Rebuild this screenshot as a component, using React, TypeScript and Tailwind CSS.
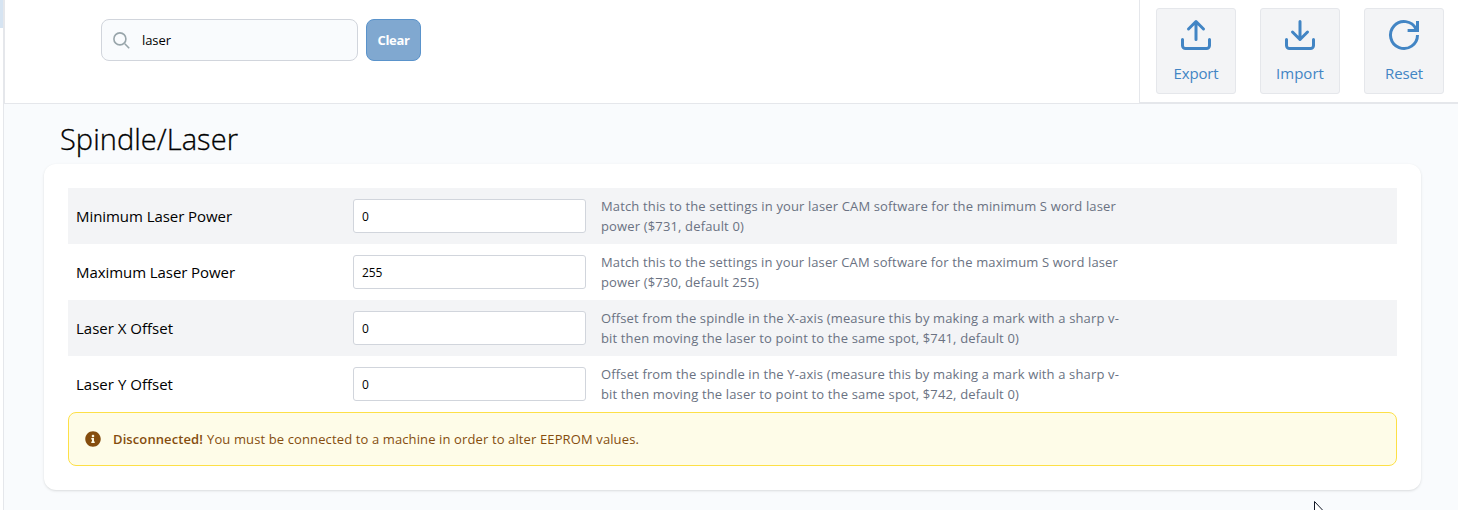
import React from "react";
import { FaInfoCircle } from "react-icons/fa";

const rows = [
  { label: "Minimum Laser Power", w: 156, value: "0", lines: ["Match this to the settings in your laser CAM software for the minimum S word laser", "power ($731, default 0)"] , lw: [515, 143] },
  { label: "Maximum Laser Power", w: 159, value: "255", lines: ["Match this to the settings in your laser CAM software for the maximum S word laser", "power ($730, default 255)"], lw: [517, 158] },
  { label: "Laser X Offset", w: 97, value: "0", lines: ["Offset from the spindle in the X-axis (measure this by making a mark with a sharp v-", "bit then moving the laser to point to the same spot, $741, default 0)"], lw: [518, 418] },
  { label: "Laser Y Offset", w: 97, value: "0", lines: ["Offset from the spindle in the Y-axis (measure this by making a mark with a sharp v-", "bit then moving the laser to point to the same spot, $742, default 0)"], lw: [518, 418] },
];

function Fit({ w, children }: { w: number; children: string }) {
  const ref = React.useRef<HTMLSpanElement>(null);
  const [ls, setLs] = React.useState(0);
  React.useLayoutEffect(() => {
    if (ref.current) {
      const natural = ref.current.getBoundingClientRect().width - ls * children.length;
      setLs((w - natural) / children.length);
    }
  }, [w, children]);
  return (
    <span ref={ref} className="inline-block whitespace-pre" style={{ letterSpacing: ls + "px" }}>
      {children}
    </span>
  );
}

function Stroke({ children }: { children: React.ReactNode }) {
  return (
    <svg viewBox="0 0 24 24" className="size-9 shrink-0" fill="none" stroke="currentColor" strokeWidth="2" strokeLinecap="round" strokeLinejoin="round">
      {children}
    </svg>
  );
}

function Action({ label, w, children }: { label: string; w: number; children: React.ReactNode }) {
  return (
    <button className="flex h-[86px] w-20 flex-col items-center rounded-[3px] border border-gray-200 bg-gray-100 pt-2 text-[#4285c4]">
      {children}
      <span className="mt-2 text-[15px] leading-6"><Fit w={w}>{label}</Fit></span>
    </button>
  );
}

export default function App() {
  return (
    <div className="flex h-[510px] w-full overflow-hidden bg-white font-['Open_Sans',sans-serif] text-black">
      <div className="w-[3px] shrink-0">
        <div className="h-7 bg-[#d6e4f2]" />
      </div>
      <div className="relative flex flex-1 flex-col border-l border-gray-200 bg-[#f9fbfd]">
        <header className="flex h-[104px] shrink-0 border-b border-l border-gray-200 bg-white">
          <div className="flex flex-1 items-start gap-2 pt-[19px] pl-24">
            <label className="flex h-[42px] w-[257px] items-center rounded-lg border border-gray-300 bg-[#f9fbfd] pl-[11px] text-[13px]">
              <svg viewBox="0 0 17 17" className="mr-3 size-[17px]" fill="none" stroke="#98a5aa" strokeWidth="1.6">
                <circle cx="6.9" cy="6.9" r="6" />
                <path d="M11.8 11.8 16.2 16.2" />
              </svg>
              <span className="pt-0.5"><Fit w={29}>laser</Fit></span>
            </label>
            <button className="flex h-[42px] w-[55px] items-center justify-center rounded-lg border border-[#5a93cb] bg-[#80a8d0] pt-0.5 text-[13px] font-bold text-white">
              <Fit w={32}>Clear</Fit>
            </button>
          </div>
          <div className="flex h-[103px] w-[319px] gap-6 border-b border-l border-gray-200 pt-2 pl-4">
            <Action label="Export" w={45}>
              <Stroke><path d="M21 15v4a2 2 0 0 1-2 2H5a2 2 0 0 1-2-2v-4M17 8l-5-5-5 5M12 3v12" /></Stroke>
            </Action>
            <Action label="Import" w={48}>
              <Stroke><path d="M21 15v4a2 2 0 0 1-2 2H5a2 2 0 0 1-2-2v-4M7 10l5 5 5-5M12 15V3" /></Stroke>
            </Action>
            <Action label="Reset" w={38}>
              <svg viewBox="0 0 24 24" className="size-9 shrink-0" fill="none" stroke="currentColor" strokeWidth="2">
                <path d="M21 12a9 9 0 1 1-.95-4.03L20.5 9M21 2.7V9h-6.6" />
              </svg>
            </Action>
          </div>
        </header>
        <main className="flex flex-col pr-[37px] pl-10">
          <h1 className="flex h-[60px] items-center pt-2.5 pl-4 text-[29px] font-light [-webkit-text-stroke:0.3px_black]"><Fit w={178}>Spindle/Laser</Fit></h1>
          <section className="h-[326px] rounded-xl bg-white p-6 shadow-sm">
            {rows.map((r) => (
              <div key={r.label} className="flex h-14 items-center pl-2 odd:bg-gray-100">
                <div className="w-[277px] text-[15px]"><Fit w={r.w}>{r.label}</Fit></div>
                <div className="flex h-[34px] w-[233px] items-center rounded-[3px] border border-gray-300 bg-white pt-0.5 pl-2 text-xs">
                  <Fit w={r.value.length * 6.7}>{r.value}</Fit>
                </div>
                <div className="ml-[15px] flex flex-col text-[13px] leading-5 text-gray-500">
                  {r.lines.map((l, i) => <div key={l} className="h-5"><Fit w={r.lw[i]}>{l}</Fit></div>)}
                </div>
              </div>
            ))}
            <div className="flex h-[54px] items-center rounded-lg border border-[#fde047] bg-[#fefce8] pl-4 text-[13px] text-[#854d0e]">
              <FaInfoCircle className="mr-3 size-4" />
              <span className="mr-1 pt-0.5 font-semibold"><Fit w={90}>Disconnected!</Fit></span>
              <span className="pt-0.5"><Fit w={432}>You must be connected to a machine in order to alter EEPROM values.</Fit></span>
            </div>
          </section>
        </main>
        <svg viewBox="0 0 12 19" className="absolute top-[501px] left-[1310px] h-[19px] w-3" fill="white" stroke="#111827">
          <path d="M.5.5v16l3.7-3.5 2.4 5.5 2.2-1-2.4-5.3h5.1z" />
        </svg>
      </div>
    </div>
  );
}
